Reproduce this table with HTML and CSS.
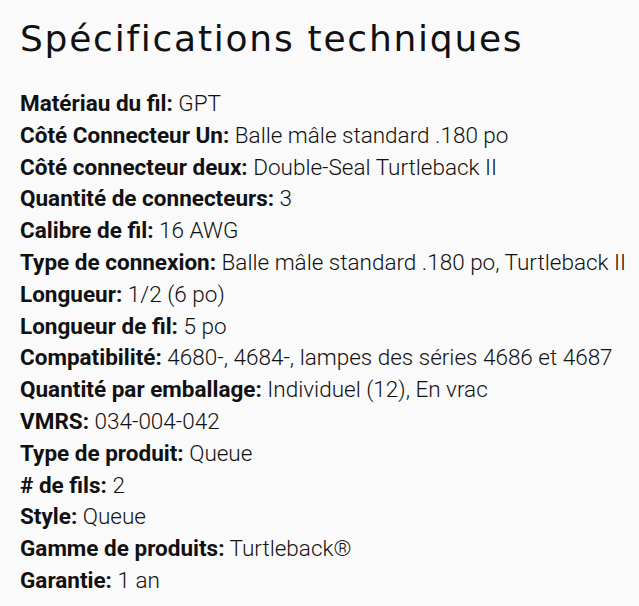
FILE: index.html
```html
<!DOCTYPE html>
<html lang="fr">
<head>
<meta charset="utf-8">
<link rel="stylesheet" href="styles.css">
</head>
<body>
<section class="specs">
  <h2 class="specs-title">Spécifications techniques</h2>
  <ul class="specs-list">
    <li><strong>Matériau du fil:</strong> GPT</li>
    <li><strong>Côté Connecteur Un:</strong> Balle mâle standard .180 po</li>
    <li><strong>Côté connecteur deux:</strong> Double-Seal Turtleback II</li>
    <li><strong>Quantité de connecteurs:</strong> 3</li>
    <li><strong>Calibre de fil:</strong> 16 AWG</li>
    <li><strong>Type de connexion:</strong> Balle mâle standard .180 po, Turtleback II</li>
    <li><strong>Longueur:</strong> 1/2 (6 po)</li>
    <li><strong>Longueur de fil:</strong> 5 po</li>
    <li><strong>Compatibilité:</strong> 4680-, 4684-, lampes des séries 4686 et 4687</li>
    <li><strong>Quantité par emballage:</strong> Individuel (12), En vrac</li>
    <li><strong>VMRS:</strong> 034-004-042</li>
    <li><strong>Type de produit:</strong> Queue</li>
    <li><strong># de fils:</strong> 2</li>
    <li><strong>Style:</strong> Queue</li>
    <li><strong>Gamme de produits:</strong> Turtleback®</li>
    <li><strong>Garantie:</strong> 1 an</li>
  </ul>
</section>
</body>
</html>
```
FILE: styles.css
```css
html, body {
  margin: 0;
  background: #fafafa;
}
.specs {
  padding: 14px 20px 0 20px;
  color: #111;
}
.specs-title {
  margin: 0 0 24px 0;
  font-family: "DejaVu Sans", "Open Sans", sans-serif;
  font-weight: 400;
  font-size: 36px;
  line-height: 50px;
  letter-spacing: 1.75px;
  color: #111;
}
.specs-list {
  list-style: none;
  margin: 0;
  padding: 0;
  font-family: Roboto, "Liberation Sans", sans-serif;
  font-size: 22.5px;
  line-height: 31.8px;
  font-weight: 300;
  white-space: nowrap;
}
.specs-list strong {
  font-weight: 700;
}
```
